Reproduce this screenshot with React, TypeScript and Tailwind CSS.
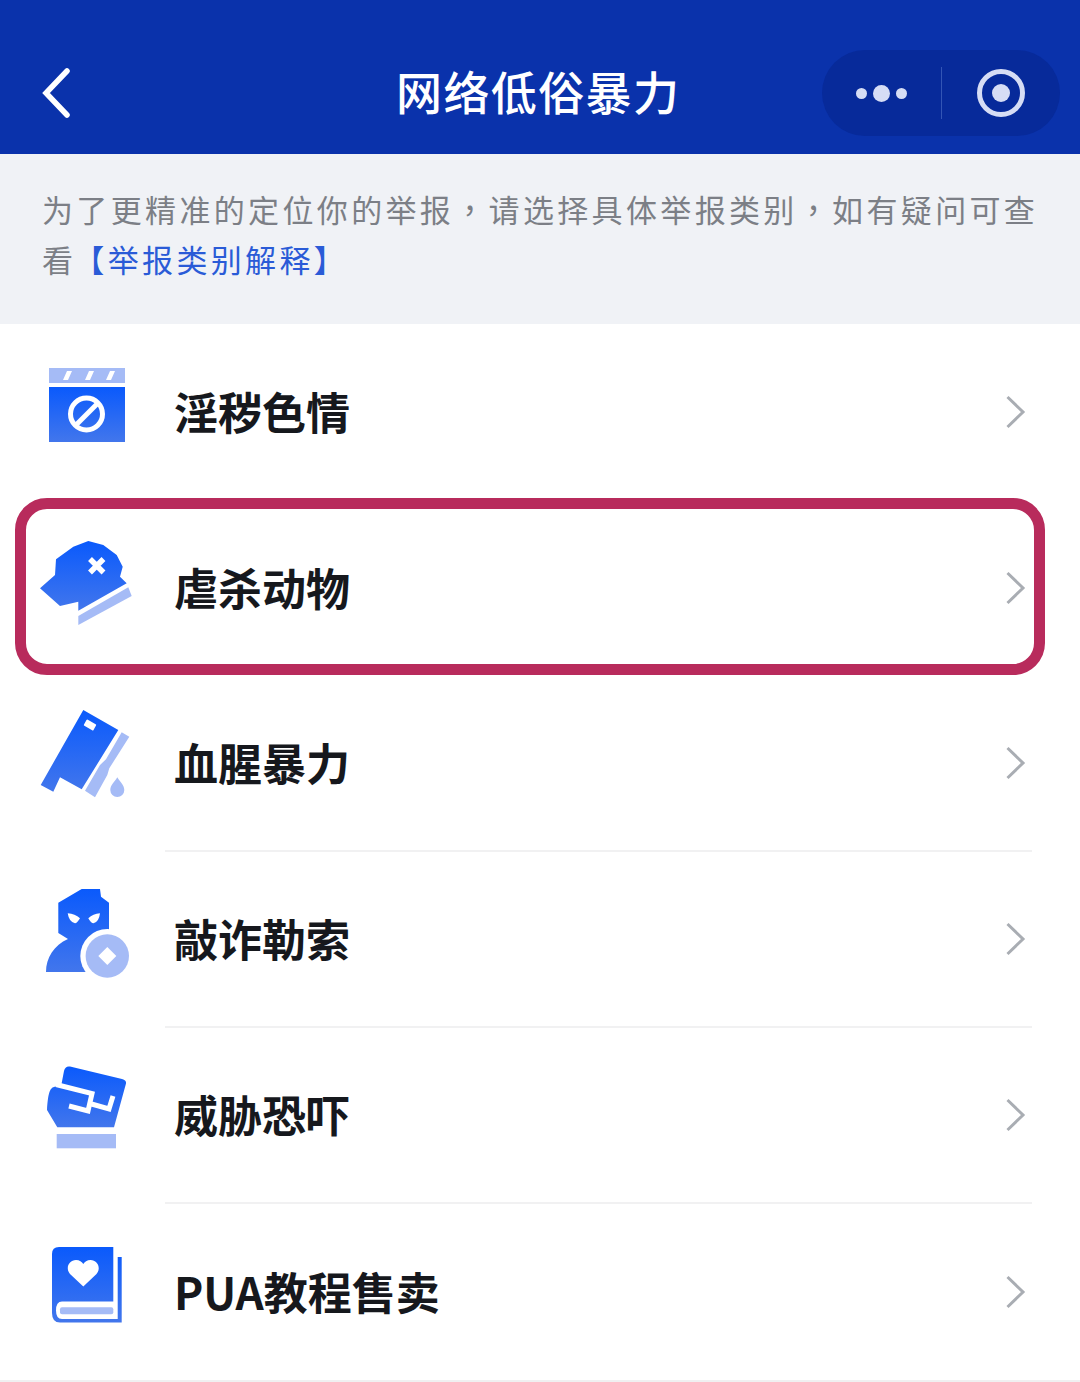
import type { ReactNode } from 'react';

const LIGHT = '#a5bbf6';

const Gradient = ({ id }: { id: string }) => (
  <defs>
    <linearGradient id={id} x1="0" y1="0" x2="0" y2="1">
      <stop offset="0" stopColor="#0a5afc" />
      <stop offset="1" stopColor="#4276ec" />
    </linearGradient>
  </defs>
);

const IconBox = ({ children }: { children: ReactNode }) => (
  <svg viewBox="0 0 100 100" className="w-[100px] h-[100px] shrink-0 overflow-visible">
    {children}
  </svg>
);

const ClapperIcon = () => (
  <IconBox>
    <Gradient id="g1" />
    <rect x="13" y="6" width="76" height="15" fill={LIGHT} />
    <path d="M27 18l4-9h5l-4 9zM49 18l4-9h5l-4 9zM70 18l4-9h5l-4 9z" fill="#fff" />
    <rect x="13" y="25" width="76" height="55" fill="url(#g1)" />
    <circle cx="50.5" cy="52" r="16" fill="none" stroke="#fff" strokeWidth="5" />
    <path d="M40 63L62 41" stroke="#fff" strokeWidth="5" />
  </IconBox>
);

const DogIcon = () => (
  <IconBox>
    <Gradient id="g2" />
    <path
      d="M4 50.3L19 37 20 21.3 37.3 8.7 52.3 3 67.3 7 80.7 17 86.7 28.7 84 38.7 90.7 45.3 42.3 72.7 42.3 63.7 24 68Z"
      fill="url(#g2)"
      strokeLinejoin="round"
    />
    <path d="M92.3 49.3L95.7 58 42.3 87 42.3 78Z" fill={LIGHT} />
    <path d="M54 21l13.5 13.5M67.5 21L54 34.500" stroke="#fff" strokeWidth="5.500" />
  </IconBox>
);

const CleaverIcon = () => (
  <IconBox>
    <Gradient id="g3" />
    <path d="M47.3 -4L82.3 16 45.7 75.300 24 63.300 17.300 77.700 4.700 71Z" fill="url(#g3)" />
    <rect x="48.500" y="7.500" width="11" height="7" rx="1" fill="#fff" transform="rotate(30 54 11)" />
    <path d="M85.700 18.300L93.300 22.700 73.300 54.300 71.300 61 59 83.300 49 76.700 64 51 70 45.300Z" fill={LIGHT} />
    <path d="M81.300 63.300C84 68 88.300 71 88.300 76A7 7 0 0 1 74.300 76C74.300 71 78.600 68 81.300 63.300Z" fill={LIGHT} />
  </IconBox>
);

const ExtortIcon = () => (
  <IconBox>
    <Gradient id="g4" />
    <path
      d="M22.300 12.700L45.700-1 64-1 65 6.700 73 12.700 73 45 66 50 54 82 10 82C10 68 18 55 32 49L22.300 43Z"
      fill="url(#g4)"
    />
    <path d="M31.700 23.300Q39 24 44 28.300 41 33.300 39 33.300 33 32 31.700 23.300ZM64 23.300Q57 24 52.300 28.300 55 33.300 57.500 33.300 63 32 64 23.300Z" fill="#fff" />
    <circle cx="71.300" cy="66" r="27" fill="#fff" />
    <circle cx="71.300" cy="66" r="21.700" fill={LIGHT} />
    <path d="M71.300 57l9 9-9 9-9-9z" fill="#fff" />
  </IconBox>
);

const FistIcon = () => (
  <IconBox>
    <Gradient id="g5" />
    <path
      d="M34 0.500C30.500 0 29 1.500 28 5L25.500 18 18 21C14 22 12 27 11 44L21.300 61.300 78 61.300 90 17.500C90.500 15 89 14 86 13Z"
      fill="url(#g5)"
    />
    <path d="M20 18.500L56 27.500 52 45 33 40M52 37L73 43 77 30" fill="none" stroke="#fff" strokeWidth="5" />
    <rect x="20.700" y="68" width="59.300" height="14.300" fill={LIGHT} />
  </IconBox>
);

const BookIcon = () => (
  <IconBox>
    <Gradient id="g6" />
    <path
      d="M16 12Q16 5 23 5H77.300V59.500H26Q20 59.500 20 68.500Q20 77 26 77H81.700V15H85.700V80.500H24Q16 80.500 16 71Z"
      fill="url(#g6)"
    />
    <rect x="24" y="65.300" width="53.300" height="7" rx="2" fill={LIGHT} />
    <path d="M47.300 44.500L34 32C29 26 33 18 40 18 43.500 18 46 20 47.300 22 48.600 20 51 18 54.500 18 61.500 18 65.500 26 60.500 32Z" fill="#fff" />
  </IconBox>
);

const ChevronRight = () => (
  <svg viewBox="0 0 32 40" className="w-8 h-10 shrink-0" fill="none">
    <path d="M7.500 5L23 20 7.500 35" stroke="#a9adb3" strokeWidth="3" />
  </svg>
);

const Comma = () => <span className="font-['Noto_Sans_CJK_TC',sans-serif]">，</span>;

const rows = [
  { label: '淫秽色情', icon: <ClapperIcon />, divider: false, marked: false },
  { label: '虐杀动物', icon: <DogIcon />, divider: false, marked: true },
  { label: '血腥暴力', icon: <CleaverIcon />, divider: true, marked: false },
  { label: '敲诈勒索', icon: <ExtortIcon />, divider: true, marked: false },
  { label: '威胁恐吓', icon: <FistIcon />, divider: true, marked: false },
  { label: 'PUA教程售卖', icon: <BookIcon />, divider: false, marked: false },
];

export default function App() {
  return (
    <div className="w-[1080px] h-[1382px] overflow-hidden bg-white font-['Noto_Sans_CJK_SC','Inter',sans-serif]">
      <header className="h-[154px] bg-[#0a32ab] flex items-end pb-[18px] pl-[36px] pr-[20px] relative">
        <div className="w-[786px] h-[86px] flex items-center">
          <svg viewBox="0 0 40 60" className="w-10 h-[60px] shrink-0" fill="none">
            <path d="M31 8L10 30 31 52" stroke="#fff" strokeWidth="5.500" strokeLinecap="round" />
          </svg>
          <h1 className="ml-[320px] mb-[7px] text-[46px] leading-[60px] font-medium text-white tracking-[1.4px] whitespace-nowrap">
            网络低俗暴力
          </h1>
        </div>
        <div className="w-[238px] h-[86px] rounded-full bg-[#072a9a] flex items-center">
          <div className="w-[119px] flex items-center justify-center gap-[6px]">
            <span className="w-[11px] h-[11px] rounded-full bg-[#d6ddf5]" />
            <span className="w-[17px] h-[17px] rounded-full bg-[#d6ddf5]" />
            <span className="w-[11px] h-[11px] rounded-full bg-[#d6ddf5]" />
          </div>
          <div className="w-px h-[52px] bg-[#3355b5]" />
          <div className="flex-1 flex items-center justify-center">
            <div className="w-[48px] h-[48px] rounded-full border-[5px] border-[#d6ddf5] flex items-center justify-center">
              <span className="w-[18px] h-[18px] rounded-full bg-[#d6ddf5]" />
            </div>
          </div>
        </div>
      </header>

      <section className="h-[170px] bg-[#f0f2f6] pl-[42px] pt-[30px] text-[31px] leading-[50px] tracking-[3.35px] text-[#7c7f86] whitespace-nowrap">
        <div className="flex">
          <span>为了更精准的定位你的举报</span>
          <Comma />
          <span>请选择具体举报类别</span>
          <Comma />
          <span>如有疑问可查</span>
        </div>
        <div className="flex">
          <span>看</span>
          <span className="-ml-[3px] text-[#2a5bd7]">【举报类别解释】</span>
        </div>
      </section>

      <ul>
        {rows.map((row) => (
          <li key={row.label} className="relative h-[176px] flex items-center pl-[36px] pr-[48px]">
            {row.icon}
            <div
              className={`ml-[29px] flex-1 h-full box-border flex items-center justify-between pl-[9px] ${
                row.divider ? 'border-b-2 border-[#f1f1f2]' : ''
              }`}
            >
              <span className="mb-[3px] text-[44px] leading-[60px] font-bold text-[#16181d] whitespace-nowrap">
                {row.label}
              </span>
              <ChevronRight />
            </div>
            {row.marked && (
              <div className="absolute left-[15px] top-[-2px] w-[1030px] h-[177px] rounded-[32px] border-[11px] border-[#b82b5c]" />
            )}
          </li>
        ))}
      </ul>
      <div className="h-[2px] bg-[#f0f0f1]" />
    </div>
  );
}
